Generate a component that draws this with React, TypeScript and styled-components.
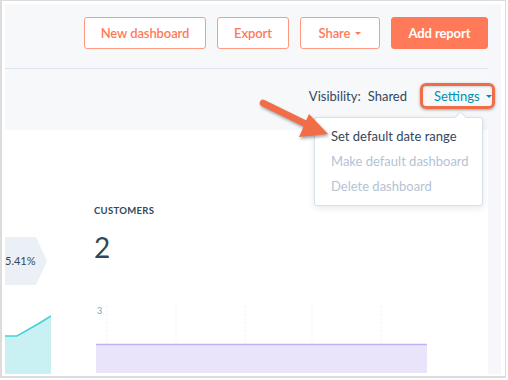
import React from "react";
import styled, { createGlobalStyle } from "styled-components";

const GlobalStyle = createGlobalStyle`
  html, body {
    margin: 0;
    padding: 0;
    background: #ffffff;
    font-family: Lato, "Open Sans", sans-serif;
    color: #33475b;
  }
  * { box-sizing: border-box; }
`;

const Frame = styled.div`
  width: 506px;
  height: 378px;
  display: flex;
  border-style: solid;
  border-color: #dcdcdc;
  border-width: 1px 1px 2px 2px;
  padding: 3px 4px 2px 3px;
  background: #ffffff;
`;

const Main = styled.div`
  position: relative;
  width: 483px;
  display: flex;
  flex-direction: column;
`;

const SideStrip = styled.div`
  width: 13px;
  background: #f6f7fb;
`;

const Header = styled.div`
  height: 126px;
  background: #f6f8fa;
  display: flex;
  flex-direction: column;
`;

const Toolbar = styled.div`
  height: 65px;
  display: flex;
  justify-content: flex-end;
  align-items: flex-start;
  gap: 11px;
  padding-top: 13px;
  border-bottom: 1px solid #dbe4ee;
`;

const Button = styled.button<{ $primary?: boolean; $w: number }>`
  width: ${(p) => p.$w}px;
  height: 32px;
  border-radius: 3px;
  border: 1px solid ${(p) => (p.$primary ? "#ff7a59" : "#ff9a80")};
  background: ${(p) => (p.$primary ? "#ff7a59" : "#ffffff")};
  color: ${(p) => (p.$primary ? "#ffffff" : "#ff7a59")};
  font-family: Lato, sans-serif;
  font-size: 13px;
  letter-spacing: -0.1px;
  font-weight: ${(p) => (p.$primary ? 700 : 600)};
  display: flex;
  align-items: center;
  justify-content: center;
  gap: 5px;
  padding: 0;
`;

const Caret = styled.span<{ $color: string }>`
  width: 0;
  height: 0;
  border-left: 3px solid transparent;
  border-right: 3px solid transparent;
  border-top: 3px solid ${(p) => p.$color};
`;

const MetaRow = styled.div`
  display: flex;
  justify-content: flex-end;
  align-items: center;
  padding-top: 14px;
  height: 40px;
  font-size: 13px;
`;

const MetaLabel = styled.span<{ $gap: number }>`
  color: #33475b;
  margin-right: ${(p) => p.$gap}px;
`;

const SettingsWrap = styled.div`
  position: relative;
  height: 26px;
  display: flex;
  align-items: center;
`;

const SettingsButton = styled.div`
  width: 64px;
  height: 26px;
  padding-left: 10px;
  display: flex;
  align-items: center;
  gap: 6px;
  color: #0091ae;
  font-size: 13px;
`;

const Highlight = styled.div`
  position: absolute;
  left: -4px;
  right: -7px;
  top: 0;
  bottom: 0;
  border: 3px solid #ef6e49;
  border-radius: 6px;
  box-shadow: 0 1px 3px rgba(0, 0, 0, 0.35), inset 0 1px 2px rgba(0, 0, 0, 0.15);
`;

const Menu = styled.div`
  position: absolute;
  left: -110px;
  top: 34px;
  width: 169px;
  background: #ffffff;
  border: 1px solid #d6e0ea;
  border-radius: 3px;
  box-shadow: 0 2px 6px rgba(45, 62, 80, 0.12);
  padding: 6px 0 6px 16px;
  z-index: 2;

  &::before {
    content: "";
    position: absolute;
    top: -5px;
    left: 141px;
    width: 8px;
    height: 8px;
    background: #ffffff;
    border-left: 1px solid #d6e0ea;
    border-top: 1px solid #d6e0ea;
    transform: rotate(45deg);
  }
`;

const MenuItem = styled.div<{ $disabled?: boolean }>`
  height: 25px;
  line-height: 25px;
  font-size: 13px;
  color: ${(p) => (p.$disabled ? "#b4c3d5" : "#33475b")};
`;

const Body = styled.div`
  flex: 1;
  display: flex;
  background: #ffffff;
`;

const LeftCard = styled.div`
  width: 46px;
  display: flex;
  flex-direction: column;
  padding-top: 107px;
`;

const Tag = styled.div`
  width: 42px;
  height: 48px;
  background: #eaf0f6;
  clip-path: polygon(0 0, 31px 0, 42px 50%, 31px 100%, 0 100%);
  font-size: 11px;
  line-height: 48px;
  color: #33475b;
`;

const CustomersCard = styled.div`
  margin-left: 43px;
  display: flex;
  flex-direction: column;
  padding-top: 75px;
`;

const Title = styled.div`
  font-size: 9.5px;
  font-weight: 700;
  line-height: 12px;
  letter-spacing: 0.3px;
  color: #33475b;
`;

const BigNumber = styled.div`
  margin-top: 15px;
  font-size: 28px;
  font-weight: 400;
  line-height: 30px;
  color: #33475b;
`;

const ChartArea = styled.svg`
  display: block;
  margin-top: 42px;
`;

const Arrow = styled.svg`
  position: absolute;
  left: 245px;
  top: 86px;
  overflow: visible;
  filter: drop-shadow(1px 2px 1.5px rgba(0, 0, 0, 0.35));
  z-index: 3;
`;

const gridX = [13, 82, 151, 218, 287];

export default function App() {
  return (
    <>
      <GlobalStyle />
      <Frame>
        <Main>
          <Header>
            <Toolbar>
              <Button $w={122}>New dashboard</Button>
              <Button $w={72}>Export</Button>
              <Button $w={80}>
                Share <Caret $color="#ff7a59" />
              </Button>
              <Button $w={97} $primary>
                Add report
              </Button>
            </Toolbar>
            <MetaRow>
              <MetaLabel $gap={7}>Visibility:</MetaLabel>
              <MetaLabel $gap={17}>Shared</MetaLabel>
              <SettingsWrap>
                <SettingsButton>
                  Settings <Caret $color="#0091ae" />
                </SettingsButton>
                <Highlight />
                <Menu>
                  <MenuItem>Set default date range</MenuItem>
                  <MenuItem $disabled>Make default dashboard</MenuItem>
                  <MenuItem $disabled>Delete dashboard</MenuItem>
                </Menu>
              </SettingsWrap>
            </MetaRow>
          </Header>
          <Body>
            <LeftCard>
              <Tag>5.41%</Tag>
              <svg width="46" height="64" style={{ marginTop: 25 }}>
                <polygon points="0,26 12,26 33,14 46,6 46,64 0,64" fill="#c9f1f3" />
                <polyline points="0,26 12,26 33,14 46,6" fill="none" stroke="#45d2d6" strokeWidth="1.6" />
              </svg>
            </LeftCard>
            <CustomersCard>
              <Title>CUSTOMERS</Title>
              <BigNumber>2</BigNumber>
              <ChartArea width="340" height="69">
                {gridX.map((x) => (
                  <line key={x} x1={x} y1={2} x2={x} y2={69} stroke="#eef1f5" strokeDasharray="2 2" />
                ))}
                <text x="3" y="10" fontSize="9" fill="#8a9cb2" fontFamily="Lato, sans-serif">
                  3
                </text>
                <rect x="2" y="40" width="331" height="29" fill="#e9e4f9" />
                <line x1="2" y1="40.5" x2="333" y2="40.5" stroke="#c3b2f2" strokeWidth="1.5" />
              </ChartArea>
            </CustomersCard>
          </Body>
          <Arrow width="90" height="60" viewBox="0 0 90 60">
            <line x1="13" y1="13" x2="56" y2="34" stroke="#f26c47" strokeWidth="6.5" strokeLinecap="round" />
            <polygon points="59,24 78,44 49,47" fill="#f26c47" />
          </Arrow>
        </Main>
        <SideStrip />
      </Frame>
    </>
  );
}
